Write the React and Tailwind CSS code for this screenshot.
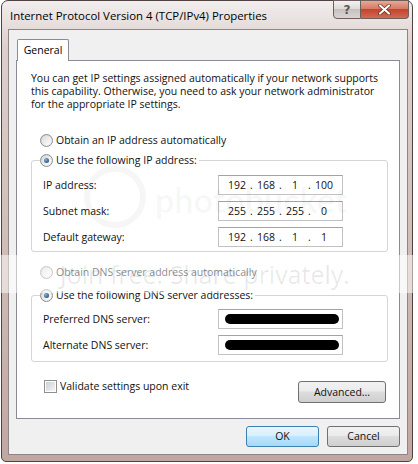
import React from "react";

function Radio({ checked }) {
  return (
    <span className="inline-flex w-[13px] h-[13px] rounded-full border border-[#8e8f8f] bg-[linear-gradient(135deg,#cfcfcf,#f8f8f8)] items-center justify-center shrink-0">
      <span className="w-[9px] h-[9px] rounded-full bg-[linear-gradient(135deg,#dcdcdc,#fdfdfd)] flex items-center justify-center">
        {checked && (
          <span className="w-[5px] h-[5px] rounded-full bg-[radial-gradient(circle_at_35%_35%,#7fb2d8,#123a5e)]" />
        )}
      </span>
    </span>
  );
}

function Checkbox() {
  return (
    <span className="inline-flex w-[13px] h-[13px] border border-[#8e8f8f] bg-white items-center justify-center shrink-0">
      <span className="w-[9px] h-[9px] bg-[linear-gradient(135deg,#cbcfd5,#f6f6f6)]" />
    </span>
  );
}

function IpBox({ parts }) {
  return (
    <div className="w-[125px] h-[20px] border border-[#c2c2c2] border-t-[#a3a3a3] bg-white flex items-center pl-[7px] text-[#111]">
      {parts.map((p, i) => (
        <React.Fragment key={i}>
          {i > 0 && <span className="w-[7px] text-center">.</span>}
          <span className="w-[22px] text-center">{p}</span>
        </React.Fragment>
      ))}
    </div>
  );
}

function HiddenBox() {
  return (
    <div className="w-[125px] h-[20px] border border-[#c2c2c2] border-t-[#a3a3a3] bg-white flex items-center pl-[6px]">
      <span className="w-[114px] h-[10px] rounded-[5px] bg-black" />
    </div>
  );
}

function Row({ label, children }) {
  return (
    <div className="flex items-center h-[20px]">
      <span className="w-[175px] text-[#111]">{label}</span>
      {children}
    </div>
  );
}

function Btn({ children, primary, className = "" }) {
  return (
    <div
      className={
        "flex items-center justify-center rounded-[3px] border " +
        (primary
          ? "border-[#3c7fb1] bg-[linear-gradient(180deg,#eaf6fd_0%,#d9f0fc_45%,#bee6fd_50%,#a7d9f5_100%)] "
          : "border-[#707070] bg-[linear-gradient(180deg,#f2f2f2_0%,#ebebeb_45%,#dddddd_50%,#cfcfcf_100%)] ") +
        className
      }
    >
      <span className="text-[#111]">{children}</span>
    </div>
  );
}

export default function App() {
  return (
    <div className="relative w-[418px] h-[464px] bg-white overflow-hidden font-['Open_Sans',sans-serif] text-[10.5px] leading-[13px] text-black">
      <div className="ml-[1px] w-[412px] h-[462px] border border-[#4f4240] rounded-t-[7px] rounded-b-[5px] bg-[linear-gradient(180deg,#f1eeed_0%,#dcd0cd_10%,#cfbcb8_55%,#c1a7a2_100%)] flex flex-col">
        {/* title bar */}
        <div className="h-[28px] flex items-start shrink-0">
          <span className="pl-[8px] pt-[8px] text-[11.4px] text-black">
            Internet Protocol Version 4 (TCP/IPv4) Properties
          </span>
          <div className="ml-auto mr-[3px] -mt-[1px] flex">
            <div className="w-[28px] h-[19px] border border-[#6e5f5d] rounded-bl-[4px] bg-[linear-gradient(180deg,#f3f1f1_0%,#dedada_45%,#c7c1c0_50%,#d9d3d2_100%)] flex items-center justify-center">
              <span className="text-[12px] leading-[12px] font-bold text-[#5d5858] font-['DejaVu_Sans',sans-serif]">?</span>
            </div>
            <div className="w-[48px] h-[19px] border border-[#6e5f5d] border-l-0 rounded-br-[4px] bg-[linear-gradient(180deg,#e8a898_0%,#d77a66_45%,#c4442e_50%,#d16a55_100%)] flex items-center justify-center">
              <svg width="13" height="11" viewBox="0 0 13 11">
                <path d="M2 1.5 L11 9.5 M11 1.5 L2 9.5" stroke="#6b2418" strokeWidth="3.6" strokeLinecap="round" />
                <path d="M2 1.5 L11 9.5 M11 1.5 L2 9.5" stroke="#ffffff" strokeWidth="2.2" strokeLinecap="round" />
              </svg>
            </div>
          </div>
        </div>

        {/* client area */}
        <div className="ml-[6px] w-[400px] h-[426px] border border-[#8f8584] bg-[#f0f0f0] flex flex-col px-[7px] pt-[9px]">
          {/* tab strip */}
          <div className="flex ml-[1px]">
            <div className="relative z-10 -mb-[1px] w-[52px] h-[22px] border border-b-0 border-[#898c95] rounded-t-[2px] bg-white flex items-center justify-center">
              <span>General</span>
            </div>
          </div>
          {/* panel */}
          <div className="h-[359px] border border-[#898c95] bg-white pl-[14px] pr-[11px] pt-[11px] flex flex-col">
            <p className="text-[#111]">
              You can get IP settings assigned automatically if your network supports
              <br />
              this capability. Otherwise, you need to ask your network administrator
              <br />
              for the appropriate IP settings.
            </p>

            <div className="mt-[23px] ml-[9px] flex items-center gap-[3px] h-[13px]">
              <Radio />
              <span className="text-[#111]">Obtain an IP address automatically</span>
            </div>

            <fieldset className="mt-[7px] border border-[#d5d5d5] rounded-[3px] pt-[8px] pb-[4px]">
              <legend className="ml-[8px] pr-[2px]">
                <span className="flex items-center gap-[3px] h-[13px]">
                  <Radio checked />
                  <span className="text-[#111]">Use the following IP address:</span>
                </span>
              </legend>
              <div className="pl-[11px] flex flex-col gap-[6px]">
                <Row label="IP address:">
                  <IpBox parts={["192", "168", "1", "100"]} />
                </Row>
                <Row label="Subnet mask:">
                  <IpBox parts={["255", "255", "255", "0"]} />
                </Row>
                <Row label="Default gateway:">
                  <IpBox parts={["192", "168", "1", "1"]} />
                </Row>
              </div>
            </fieldset>

            <div className="mt-[14px] ml-[9px] flex items-center gap-[3px] h-[13px]">
              <Radio />
              <span className="text-[#111]">Obtain DNS server address automatically</span>
            </div>

            <fieldset className="mt-[10px] border border-[#d5d5d5] rounded-[3px] pt-[7px] pb-[6px]">
              <legend className="ml-[8px] pr-[2px]">
                <span className="flex items-center gap-[3px] h-[13px]">
                  <Radio checked />
                  <span className="text-[#111]">Use the following DNS server addresses:</span>
                </span>
              </legend>
              <div className="pl-[11px] flex flex-col gap-[6px]">
                <Row label="Preferred DNS server:">
                  <HiddenBox />
                </Row>
                <Row label="Alternate DNS server:">
                  <HiddenBox />
                </Row>
              </div>
            </fieldset>

            <div className="mt-[18px] flex items-start">
              <div className="ml-[13px] flex items-center gap-[3px] h-[13px]">
                <Checkbox />
                <span className="text-[#111]">Validate settings upon exit</span>
              </div>
              <Btn className="ml-auto mr-[2px] mt-[1px] w-[88px] h-[22px]">Advanced...</Btn>
            </div>
          </div>

          {/* bottom buttons */}
          <div className="mt-[7px] flex justify-end gap-[8px]">
            <Btn primary className="w-[73px] h-[21px]">OK</Btn>
            <Btn className="w-[73px] h-[21px]">Cancel</Btn>
          </div>
        </div>
      </div>

      {/* photobucket watermark overlay */}
      <div className="absolute left-[84px] top-[166px] w-[62px] h-[62px] rounded-full border-[6px] border-black/[0.035] pointer-events-none" />
      <div className="absolute left-[155px] top-[180px] text-[34px] leading-[40px] font-['Lato',sans-serif] font-bold text-black/[0.035] pointer-events-none">
        photobucket
      </div>
      <div className="absolute left-0 top-[255px] w-[418px] h-[38px] bg-white/50 pointer-events-none" />
      <div className="absolute left-[60px] top-[258px] text-[25px] leading-[32px] font-['Open_Sans',sans-serif] text-black/[0.09] pointer-events-none whitespace-nowrap">
        Join free. Share privately.
      </div>
    </div>
  );
}
